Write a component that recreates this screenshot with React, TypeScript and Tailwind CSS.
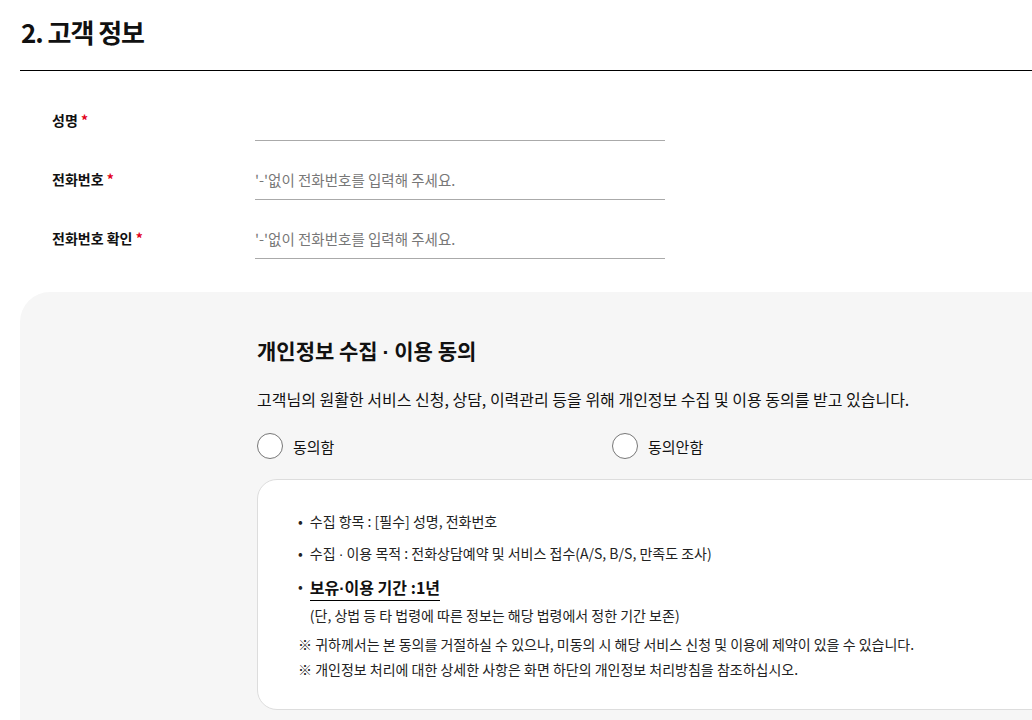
import React from 'react'

const FONT = { fontFamily: '"Noto Sans CJK KR", "Noto Sans", sans-serif' }

const FIELDS: { label: string; placeholder: string }[] = [
  { label: '성명', placeholder: '' },
  { label: '전화번호', placeholder: "'-'없이 전화번호를 입력해 주세요." },
  { label: '전화번호 확인', placeholder: "'-'없이 전화번호를 입력해 주세요." },
]

// 가운뎃점은 좁은 라틴 글꼴로
function Dot() {
  return <span style={{ fontFamily: '"Liberation Sans", sans-serif' }}>·</span>
}

function Radio({ label }: { label: string }) {
  return (
    <label className="flex items-center gap-[10px] cursor-pointer">
      <span className="w-[26px] h-[26px] rounded-full border border-[#777] bg-white shrink-0" />
      <span className="text-[15px] text-[#111] leading-none">{label}</span>
    </label>
  )
}

export default function App() {
  return (
    <div className="w-[1032px] h-[720px] overflow-hidden bg-white text-[#111]" style={FONT}>
      <div className="w-[1200px] ml-[20px]">
        {/* 제목 */}
        <div className="pt-[14px] pb-[20px] border-b border-black">
          <h2 className="pl-[1px] text-[26px] font-bold leading-[36px] tracking-[-0.04em]">2. 고객 정보</h2>
        </div>

        {/* 입력 폼 */}
        <div className="pt-[29px] flex flex-col gap-[18px]">
          {FIELDS.map(({ label, placeholder }) => (
            <div key={label} className="flex items-center">
              <div className="w-[235px] pl-[32px] text-[14px] font-bold">
                {label} <span className="text-[#e2001a]">*</span>
              </div>
              <input
                placeholder={placeholder}
                className="w-[410px] h-[41px] border-b border-[#aaa] outline-none bg-transparent text-[14.5px] placeholder:text-[#777]"
              />
            </div>
          ))}
        </div>

        {/* 개인정보 동의 */}
        <div className="mt-[33px] bg-[#f6f6f6] rounded-tl-[30px] pl-[237px] pt-[44px] pb-[40px]">
          <h3 className="text-[21px] font-bold leading-[28px]">
            개인정보 수집 <Dot /> 이용 동의
          </h3>
          <p className="mt-[21px] text-[16px] leading-[24px] text-[#111]">
            고객님의 원활한 서비스 신청, 상담, 이력관리 등을 위해 개인정보 수집 및 이용 동의를 받고 있습니다.
          </p>
          <div className="mt-[22px] flex">
            <div className="w-[355px]">
              <Radio label="동의함" />
            </div>
            <Radio label="동의안함" />
          </div>

          <div className="mt-[20px] w-[900px] bg-white border border-[#ddd] rounded-[20px] pl-[40px] pt-[31px] pb-[30px] text-[14px] leading-[20px] text-[#222]">
            <ul className="flex flex-col gap-[12px]">
              <li className="flex gap-[7px]">
                <span>•</span>
                <span>수집 항목 : [필수] 성명, 전화번호</span>
              </li>
              <li className="flex gap-[7px]">
                <span>•</span>
                <span>
                  수집 <Dot /> 이용 목적 : 전화상담예약 및 서비스 접수(A/S, B/S, 만족도 조사)
                </span>
              </li>
              <li className="flex gap-[7px]">
                <span>•</span>
                <div>
                  <span className="inline-block text-[16px] font-bold leading-[22px] border-b border-black text-[#111]">
                    보유<Dot />이용 기간 :1년
                  </span>
                  <p className="mt-[4px]">(단, 상법 등 타 법령에 따른 정보는 해당 법령에서 정한 기간 보존)</p>
                </div>
              </li>
            </ul>
            <p className="mt-[9px]">※ 귀하께서는 본 동의를 거절하실 수 있으나, 미동의 시 해당 서비스 신청 및 이용에 제약이 있을 수 있습니다.</p>
            <p className="mt-[5px]">※ 개인정보 처리에 대한 상세한 사항은 화면 하단의 개인정보 처리방침을 참조하십시오.</p>
          </div>
        </div>
      </div>
    </div>
  )
}
